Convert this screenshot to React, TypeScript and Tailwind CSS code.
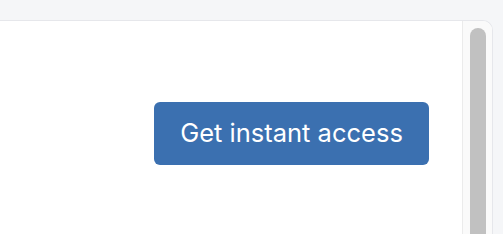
import React from "react";

export default function App() {
  return (
    <div className="w-[503px] h-[234px] bg-[#f5f6f8] pt-[20px] flex overflow-hidden">
      <div className="w-[493px] h-[214px] bg-white border-t border-r border-[#e6e7eb] rounded-tr-[10px] flex overflow-hidden">
        <div className="flex-1 flex justify-end items-start pr-[33px] pt-[81px]">
          <button
            className="w-[275px] h-[63px] rounded-[6px] bg-[#3b70b0] text-white text-[25.5px] flex items-center justify-center"
            style={{ fontFamily: "Inter, 'Noto Sans', sans-serif" }}
          >
            Get instant access
          </button>
        </div>
        <div className="w-[30px] border-l border-[#ebebeb] bg-[#fafafa] pl-[7px] pr-[6px] pt-[7px] flex">
          <div className="w-full h-[300px] rounded-full bg-[#c1c1c1]" />
        </div>
      </div>
    </div>
  );
}
